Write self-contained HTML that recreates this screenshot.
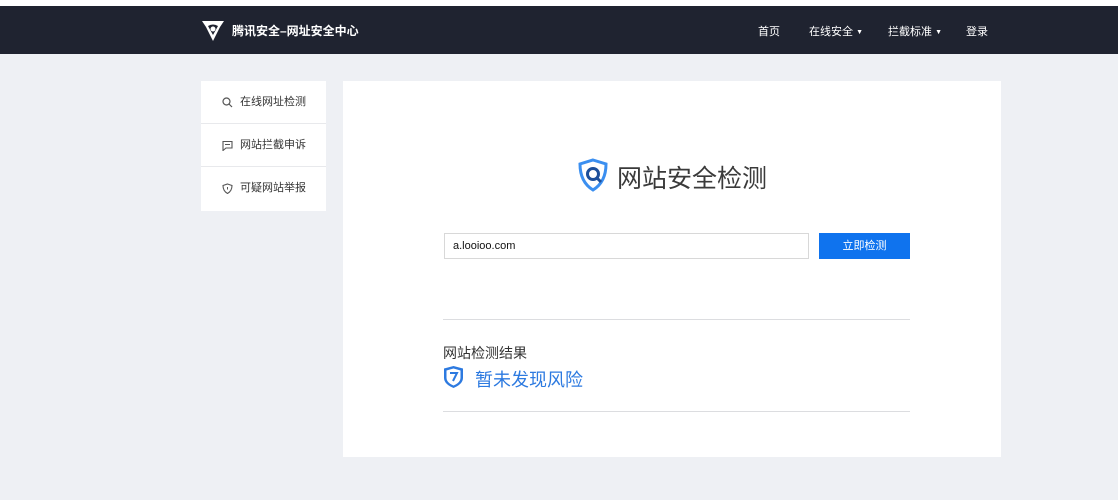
<!DOCTYPE html>
<html><head><meta charset="utf-8"><style>
*{margin:0;padding:0;box-sizing:border-box}
body{width:1118px;height:500px;background:#eef0f4;font-family:"Liberation Sans","Noto Sans CJK SC",sans-serif;position:relative;overflow:hidden}
.top{position:absolute;left:0;top:0;width:1118px;height:6px;background:#fff}
.nav{position:absolute;left:0;top:6px;width:1118px;height:48px;background:#1f2330;color:#fff}
.nav .t{position:absolute;left:232px;top:16px;font-size:12px;font-weight:bold}
.nav .m{position:absolute;top:17px;font-size:11px}
.nav .m small{font-size:7px;vertical-align:1px}
.side{position:absolute;left:201px;top:81px;width:125px;height:130px;background:#fff}
.side div{height:43px;border-bottom:1px solid #e8e9ec;font-size:11px;color:#333;padding-left:39px;line-height:43px;position:relative}
.side svg{position:absolute;left:21px;top:16px}
.card{position:absolute;left:343px;top:81px;width:658px;height:376px;background:#fff}
.h{position:absolute;left:617px;top:159px;font-size:25px;color:#3a3a3a}
.inp{position:absolute;left:444px;top:233px;width:365px;height:26px;border:1px solid #d8d8d8;font-size:11px;padding-left:8px;line-height:24px;color:#111}
.btn{position:absolute;left:819px;top:233px;width:91px;height:26px;background:#0f73ee;color:#fff;font-size:11px;text-align:center;line-height:26px}
.ln{position:absolute;left:443px;width:467px;height:1px;background:#dcdde0}
</style></head><body>
<div class="top"></div>
<div class="nav">
<svg style="position:absolute;left:200px;top:11px" width="26" height="26" viewBox="0 0 26 26"><path d="M2 4 L24 4 L20 10 L13 24 L6 10 Z" fill="#fff"/><path d="M8 9 Q13 6 18 9 L13 18 Z" fill="#1f2330"/><circle cx="13" cy="12" r="2.5" fill="#fff"/></svg>
<span class="t">腾讯安全–网址安全中心</span>
<span class="m" style="left:758px">首页</span>
<span class="m" style="left:809px">在线安全 <small>▼</small></span>
<span class="m" style="left:888px">拦截标准 <small>▼</small></span>
<span class="m" style="left:966px">登录</span>
</div>
<div class="side">
<div><svg width="11" height="11" viewBox="0 0 11 11"><circle cx="4.5" cy="4.5" r="3.5" fill="none" stroke="#555" stroke-width="1.2"/><path d="M7 7L10 10" stroke="#555" stroke-width="1.2"/></svg>在线网址检测</div>
<div><svg width="11" height="11" viewBox="0 0 11 11"><path d="M1 1.5H10V8H4L1 10.5Z" fill="none" stroke="#555" stroke-width="1.1"/><path d="M3 4.5H8" stroke="#555"/></svg>网站拦截申诉</div>
<div style="border:none"><svg width="11" height="11" viewBox="0 0 11 11"><path d="M5.5 1L10 2.5Q10 8 5.5 10.5Q1 8 1 2.5Z" fill="none" stroke="#555" stroke-width="1.1"/><path d="M5.5 4V6.5" stroke="#555"/></svg>可疑网站举报</div>
</div>
<div class="card"></div>
<svg style="position:absolute;left:577px;top:158px" width="32" height="34" viewBox="0 0 32 34"><path d="M16 2L29 6Q29 24 16 32Q3 24 3 6Z" fill="none" stroke="#3b8ff0" stroke-width="3"/><circle cx="16" cy="16" r="5.5" fill="none" stroke="#1d4f9a" stroke-width="3"/><path d="M20 20L24 24" stroke="#1d4f9a" stroke-width="3"/></svg>
<div class="h">网站安全检测</div>
<div class="inp">a.looioo.com</div>
<div class="btn">立即检测</div>
<div class="ln" style="top:319px"></div>
<div style="position:absolute;left:443px;top:343px;font-size:14px;color:#333">网站检测结果</div>
<svg style="position:absolute;left:443px;top:365px" width="21" height="24" viewBox="0 0 21 24"><path d="M10.5 1L20 3.5V13Q20 19 10.5 23Q1 19 1 13V3.5Z" fill="#2d7ae0"/><path d="M10.5 3.5L17.5 5.5V13Q17.5 17.5 10.5 20.5Q3.5 17.5 3.5 13V5.5Z" fill="#fff"/><path d="M7 8H14L10 16" fill="none" stroke="#2d7ae0" stroke-width="2"/></svg>
<div style="position:absolute;left:475px;top:366px;font-size:18px;color:#2d7ae0">暂未发现风险</div>
<div class="ln" style="top:411px"></div>
</body></html>
